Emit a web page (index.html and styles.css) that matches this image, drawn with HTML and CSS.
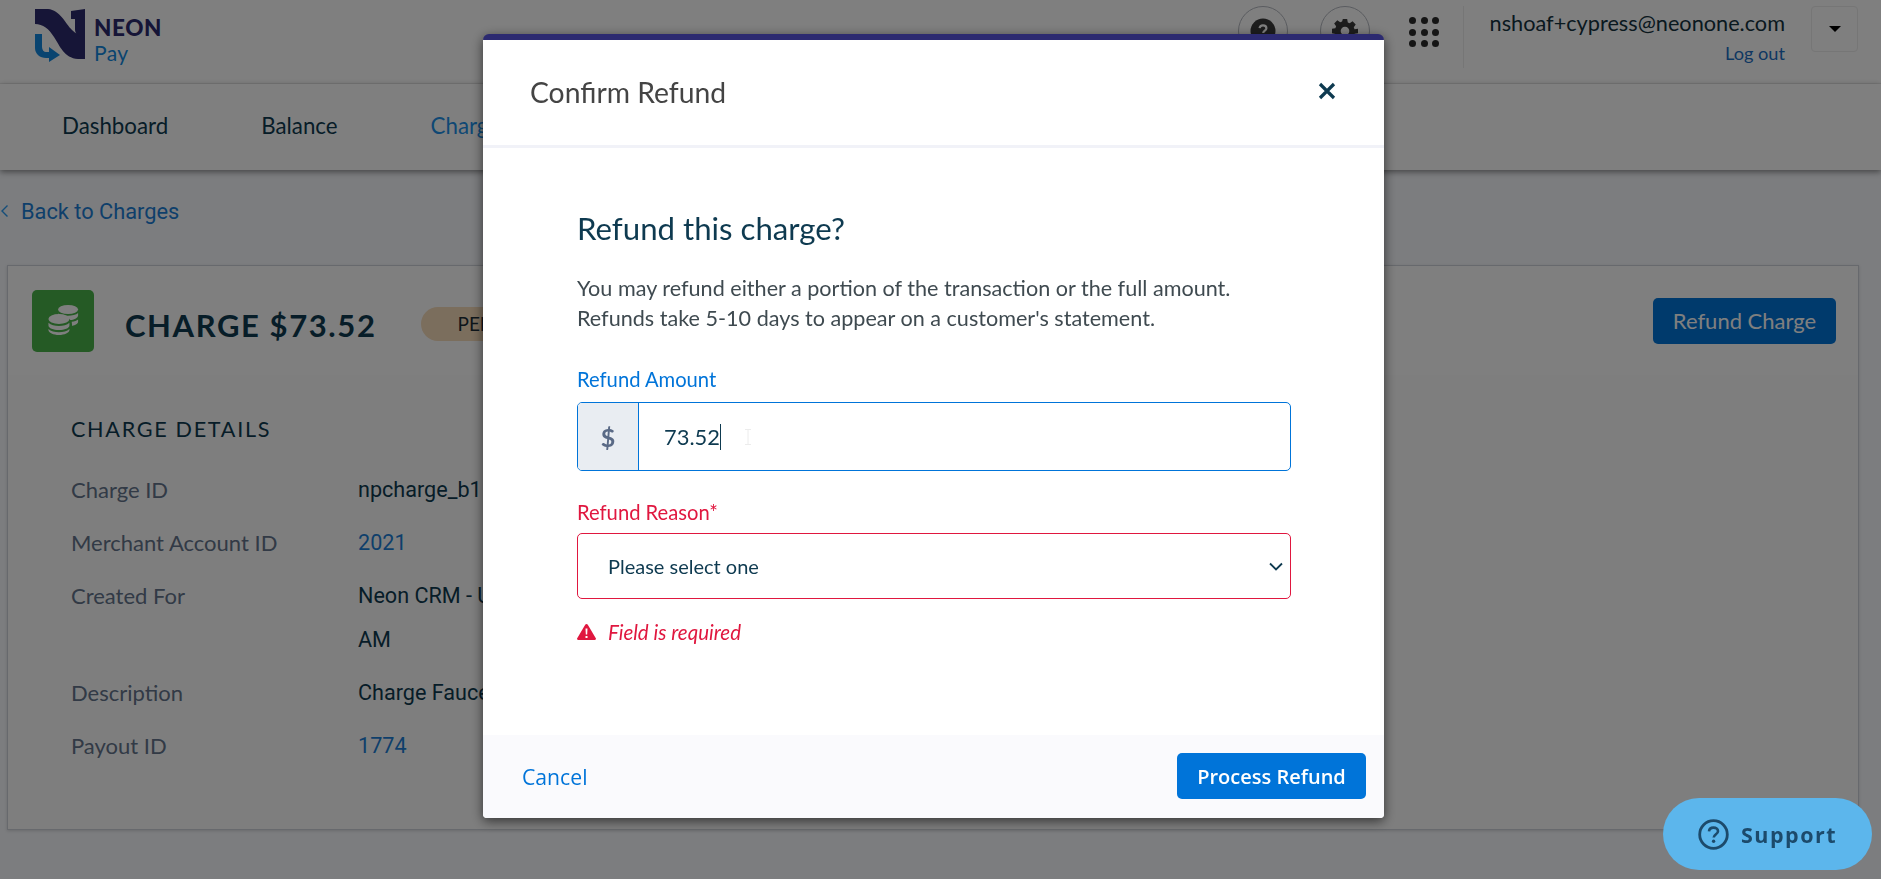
FILE: index.html
```html
<!DOCTYPE html>
<html lang="en">
<head>
<meta charset="utf-8">
<title>Confirm Refund - Neon Pay</title>
<link rel="stylesheet" href="styles.css">
</head>
<body>
<header class="topbar">
  <a class="logo" href="#">
    <svg class="logo-mark" width="60" height="56" viewBox="35 8 60 56" aria-hidden="true">
      <path class="logo-dark" d="M35 9H48C60 10 65 23 72 30C76 34 81 36 85 36V59H78C64 58 60 46 54 37C49 29 43 24 35 24Z"/>
      <path class="logo-dark" d="M71 11L85 9V37H81C77 36 75 33 75 29V19H71Z"/>
      <path class="logo-blue" d="M35 34H42V47C42 50 44 52 46 52H49V47L60 55L49 62V58H46C40 58 35 54 35 48Z"/>
    </svg>
    <span class="logo-text"><span class="logo-neon">NEON</span><span class="logo-pay">Pay</span></span>
  </a>
  <div class="top-actions">
    <span class="circle-btn">
      <svg width="26" height="26" viewBox="0 0 26 26" aria-hidden="true"><circle cx="13" cy="13" r="12.5" fill="#3a3a3a"/><path d="M9.6 10.2C9.8 8.4 11.2 7.4 13 7.4C15 7.4 16.4 8.6 16.4 10.3C16.4 12.6 13.4 12.7 13.2 15" fill="none" stroke="#fff" stroke-width="2.2"/><circle cx="13.2" cy="18" r="1.5" fill="#fff"/></svg>
    </span>
    <span class="circle-btn">
      <svg width="26" height="26" viewBox="0 0 24 24" aria-hidden="true"><path fill="#3a3a3a" d="M10 1h4l.6 3.1 1.7.7 2.7-1.8 2.9 2.9-1.8 2.7.7 1.7L24 10v4l-3.1.6-.7 1.7 1.8 2.7-2.9 2.9-2.7-1.8-1.7.7L14 24h-4l-.6-3.1-1.7-.7L5 22l-2.9-2.9 1.8-2.7-.7-1.7L0 14v-4l3.1-.6.7-1.7L2 5l2.9-2.9 2.7 1.8 1.7-.7z"/><circle cx="12" cy="12" r="4" fill="#fff"/></svg>
    </span>
    <span class="apps">
      <i></i><i></i><i></i><i></i><i></i><i></i><i></i><i></i><i></i>
    </span>
    <div class="user">
      <span class="user-email">nshoaf+cypress@neonone.com</span>
      <a class="user-logout" href="#">Log out</a>
    </div>
    <span class="user-menu"><span class="caret-down"></span></span>
  </div>
</header>

<nav class="mainnav">
  <a href="#">Dashboard</a>
  <a href="#">Balance</a>
  <a class="active" href="#">Charges</a>
</nav>

<main class="page">
  <a class="back" href="#"><svg width="9" height="14" viewBox="0 0 9 14" aria-hidden="true"><path d="M7.5 1.5L2 7l5.5 5.5" fill="none" stroke="#2a9df4" stroke-width="1.4"/></svg><span>Back to Charges</span></a>

  <section class="card">
    <div class="card-head">
      <span class="charge-icon">
        <svg width="31" height="31" viewBox="0 0 34 34" aria-hidden="true">
          <g fill="#fff">
            <ellipse cx="22" cy="6" rx="11" ry="5"/>
            <path d="M11 10.4C14 12.5 19 13 22 13C26 13 31 12 33 10V12.500C33 15 28 17.500 24.500 17.500C23.500 15.800 20 14 16.500 13.500C14.500 13.300 12 13 11 12.500Z"/>
            <path d="M26 19.500C29 19.500 31.500 18 33 17V19.500C33 21.500 30 23.500 26.500 24Z"/>
            <ellipse cx="12" cy="16.500" rx="11.500" ry="5.500"/>
            <path d="M.5 20.500C3 23 7.500 24 12 24C16.500 24 21 23 23.500 20.500V23.500C23.500 26.500 18 28.500 12 28.500C6 28.500 .5 26.500 .5 23.500Z"/>
            <path d="M.5 27.500C3 30 7.500 31 12 31C16.500 31 21 30 23.500 27.500V28.500C23.500 31.500 18 34 12 34C6 34 .5 31.500 .5 28.500Z"/>
          </g>
        </svg>
      </span>
      <h1 class="charge-title">CHARGE $73.52</h1>
      <span class="badge">PENDING</span>
      <a class="btn-refund" href="#">Refund Charge</a>
    </div>
    <div class="card-body">
      <h2 class="section-title">CHARGE DETAILS</h2>
      <dl class="details">
        <dt>Charge ID</dt><dd>npcharge_b1</dd>
        <dt>Merchant Account ID</dt><dd><a href="#">2021</a></dd>
        <dt>Created For</dt><dd>Neon CRM - U<br>AM</dd>
        <dt>Description</dt><dd>Charge Faucet</dd>
        <dt>Payout ID</dt><dd><a href="#">1774</a></dd>
      </dl>
    </div>
  </section>
</main>

<div class="backdrop">
  <div class="modal" role="dialog" aria-modal="true">
    <div class="modal-head">
      <h3 class="modal-title">Confirm Refund</h3>
      <svg class="modal-close" width="18" height="18" viewBox="0 0 18 18" aria-label="Close"><path d="M2 2l14 14M16 2L2 16" stroke="#0e3a50" stroke-width="3.2" fill="none"/></svg>
    </div>
    <div class="modal-body">
      <h4 class="question">Refund this charge?</h4>
      <p class="intro">You may refund either a portion of the transaction or the full amount.<br>Refunds take 5-10 days to appear on a customer's statement.</p>
      <label class="field-label focus">Refund Amount</label>
      <div class="amount">
        <span class="amount-addon">$</span>
        <span class="amount-value">73.52<span class="text-caret"></span></span>
        <svg class="ibeam" width="6" height="16" viewBox="0 0 6 16" aria-hidden="true"><path d="M0 .5h6M0 15.500h6M3 .5v15" stroke="#ececec" fill="none"/></svg>
      </div>
      <label class="field-label error">Refund Reason*</label>
      <div class="select">
        <span>Please select one</span>
        <svg width="14" height="9" viewBox="0 0 14 9" aria-hidden="true"><path d="M1 1.500l6 6 6-6" fill="none" stroke="#0e3a50" stroke-width="1.800"/></svg>
      </div>
      <div class="error-msg">
        <svg width="19" height="16" viewBox="0 0 19 16" aria-hidden="true"><path d="M9.500 0c.6 0 1 .3 1.300.8l8 13.400c.5.8 0 1.800-1 1.800H1.200c-1 0-1.500-1-1-1.800l8-13.400C8.500.3 8.900 0 9.500 0z" fill="#e0173f"/><path d="M8.500 4.500h2l-.3 6h-1.400zM8.500 12h2v2h-2z" fill="#fff"/></svg>
        <em>Field is required</em>
      </div>
    </div>
    <div class="modal-foot">
      <a class="cancel" href="#">Cancel</a>
      <a class="btn-process" href="#">Process Refund</a>
    </div>
  </div>
</div>

<a class="support" href="#">
  <svg width="31" height="31" viewBox="0 0 31 31" aria-hidden="true"><circle cx="15.500" cy="15.500" r="13.800" fill="none" stroke="#1c4a6b" stroke-width="2.800"/><path d="M11 12.300C11.200 9.800 13 8.600 15.500 8.600C18 8.600 20 10 20 12.200C20 15.200 16 15.200 15.700 18.500" fill="none" stroke="#1c4a6b" stroke-width="2.600"/><circle cx="15.600" cy="22.300" r="1.700" fill="#1c4a6b"/></svg>
  <span>Support</span>
</a>
</body>
</html>
```

FILE: styles.css
```css
* { box-sizing: border-box; }
html, body { height: 100%; }
body {
  margin: 0;
  height: 879px;
  overflow: hidden;
  background: #f8fafe;
  font-family: "Lato", sans-serif;
  font-size: 20px;
  color: #0e3a50;
}
a { text-decoration: none; color: inherit; }
h1, h2, h3, h4, p, dl, dd { margin: 0; font-weight: 400; }

/* top bar */
.topbar {
  height: 84px;
  background: #fff;
  border-bottom: 1px solid #f0f0f0;
  display: flex;
  align-items: flex-start;
  justify-content: space-between;
  padding: 0 23px 0 35px;
}
.logo { display: flex; align-items: flex-start; padding-top: 8px; }
.logo-mark { display: block; }
.logo-dark { fill: #2d2a6e; }
.logo-blue { fill: #1289e0; }
.logo-text { display: flex; flex-direction: column; padding-top: 7px; margin-left: -1px; }
.logo-neon { font-weight: 900; font-size: 22.500px; line-height: 26px; color: #2d2a6e; letter-spacing: .6px; }
.logo-pay { font-size: 21px; line-height: 23px; color: #1289e0; letter-spacing: .4px; }

.top-actions { display: flex; align-items: flex-start; padding-top: 6px; }
.circle-btn {
  width: 50px; height: 50px;
  border: 1px solid #b4b8c0;
  border-radius: 50%;
  display: flex; align-items: center; justify-content: center;
  margin-right: 32px;
}
.apps {
  display: grid;
  grid-template-columns: repeat(3, 7px);
  grid-auto-rows: 7px;
  gap: 4.500px;
  margin: 11px 24px 0 7px;
}
.apps i { background: #2b2b2b; border-radius: 50%; }
.user {
  width: 322px;
  height: 62px;
  border-left: 1px solid #ededed;
  display: flex; flex-direction: column; align-items: flex-end;
  padding-top: 2px;
}
.user-email { font-size: 21.700px; line-height: 30px; color: #14323f; white-space: nowrap; }
.user-logout { font-size: 18.200px; line-height: 30px; color: #1d6fc4; }
.user-menu {
  width: 47px; height: 46px;
  margin-left: 26px;
  border: 1px solid #ececec;
  border-radius: 4px;
  display: flex; align-items: center; justify-content: center;
}
.caret-down { width: 0; height: 0; border: 6px solid transparent; border-top-color: #000; border-bottom: 0; }

/* main nav */
.mainnav {
  height: 86px;
  background: #fff;
  box-shadow: 0 2px 6px rgba(0, 0, 0, .45);
  display: flex;
  align-items: center;
  padding: 0 0 4px 62px;
  gap: 93px;
  font-size: 22.300px;
  color: #0e3a50;
  position: relative;
}
.mainnav .active { color: #1e90e8; }

/* page */
.page { padding: 0 22px 0 0; }
.back {
  height: 24px;
  margin-top: 29px;
  display: flex; align-items: center;
  font-family: "Roboto", sans-serif;
  font-size: 21.800px;
  color: #1d7fd6;
}
.back svg { margin-right: 12px; }

.card {
  margin: 42px 0 0 7px;
  height: 565px;
  background: #fff;
  border: 1px solid #cfd3da;
  box-shadow: 0 1px 3px rgba(0, 0, 0, .15);
}
.card-head {
  height: 109px;
  display: flex;
  align-items: flex-start;
  padding: 24px 22px 0 24px;
}
.charge-icon {
  width: 62px; height: 62px;
  background: #4ab44a;
  border-radius: 5px;
  display: flex; align-items: center; justify-content: center;
  margin-right: 30px;
  padding: 0 0 3px 0;
}
.charge-title {
  font-size: 31px;
  line-height: 34px;
  font-weight: 700;
  letter-spacing: 1.600px;
  color: #0e3a50;
  margin-top: 18px;
  margin-right: 45px;
  margin-left: 1px;
  white-space: nowrap;
}
.badge {
  width: 150px; height: 34px;
  margin-top: 17px;
  border-radius: 17px;
  background: #f6dcbb;
  color: #1c2c36;
  font-size: 19px;
  line-height: 34px;
  padding-left: 36px;
}
.btn-refund {
  margin-left: auto;
  margin-top: 8px;
  width: 183px; height: 46px;
  background: #0074d9;
  border-radius: 5px;
  color: #fff;
  font-size: 22px;
  line-height: 45px;
  text-align: center;
}
.card-body { background: #fdfdfd; height: 454px; padding: 37px 63px 0; }
.section-title { font-size: 21.600px; line-height: 34px; letter-spacing: 1.700px; color: #0e3a50; margin-bottom: 22px; }
.details {
  display: grid;
  grid-template-columns: 287px 1fr;
  row-gap: 9px;
  line-height: 44px;
}
.details dt { color: #64748c; font-size: 22px; }
.details dd { font-family: "Roboto", sans-serif; font-size: 21.600px; color: #0e3a50; }
.details dd a { color: #1d7fd6; }

/* modal */
.backdrop {
  position: fixed;
  inset: 0;
  background: rgba(0, 0, 0, .5);
  padding: 34px 0 0 483px;
}
.modal {
  width: 901px;
  height: 784px;
  background: #fff;
  border-top: 6px solid #2c2a70;
  border-radius: 6px 6px 4px 4px;
  box-shadow: 0 3px 12px rgba(0, 0, 0, .6);
  display: flex;
  flex-direction: column;
}
.modal-head {
  height: 108px;
  flex: none;
  border-bottom: 3px solid #f1f2f8;
  display: flex;
  align-items: center;
  justify-content: space-between;
  padding: 0 48px 0 47px;
}
.modal-title { font-size: 28.300px; color: #444; margin-top: -2px; }
.modal-close { margin-top: -4px; }
.modal-body { flex: 1; padding: 63px 93px 0 94px; }
.question { font-size: 31.200px; line-height: 34px; color: #0e3a50; margin-bottom: 28px; }
.intro { font-size: 21.600px; line-height: 30px; color: #3f4a50; margin-bottom: 35px; }
.field-label { display: block; font-size: 20.200px; line-height: 22px; }
.field-label.focus { color: #0074d9; margin-bottom: 12px; }
.field-label.error { color: #e0173f; margin-top: 30px; margin-bottom: 10px; }
.amount {
  height: 69px;
  border: 1px solid #0074d9;
  border-radius: 5px;
  display: flex;
  align-items: center;
  overflow: hidden;
}
.amount-addon {
  width: 61px; height: 100%;
  background: #e9edf2;
  border-right: 1px solid #0074d9;
  color: #5a6a86;
  font-size: 25px;
  font-weight: 700;
  display: flex; align-items: center; justify-content: center;
}
.amount-value { margin-left: 25px; font-size: 21.900px; color: #0e3a50; display: flex; align-items: center; height: 26px; }
.text-caret { width: 1px; height: 26px; background: #0e3a50; }
.ibeam { margin-left: 24px; }
.select {
  height: 66px;
  border: 1px solid #e0173f;
  border-radius: 5px;
  display: flex;
  align-items: center;
  justify-content: space-between;
  padding: 0 7px 0 30px;
  font-size: 20px;
  color: #0e3a50;
}
.error-msg {
  display: flex;
  align-items: center;
  gap: 12px;
  margin-top: 21px;
  color: #e0173f;
  font-size: 20.500px;
  line-height: 24px;
}
.error-msg em { font-style: italic; }
.modal-foot {
  height: 83px;
  flex: none;
  background: #fafafd;
  border-radius: 0 0 4px 4px;
  display: flex;
  align-items: flex-start;
  justify-content: space-between;
  padding: 18px 18px 0 39px;
  font-family: "Open Sans", sans-serif;
  font-size: 20px;
}
.cancel { color: #0074d9; line-height: 47px; font-size: 21.200px; }
.btn-process {
  width: 189px; height: 46px;
  background: #0074d9;
  border-radius: 5px;
  color: #fff;
  font-weight: 600;
  line-height: 47px;
  text-align: center;
}

/* support */
.support {
  position: fixed;
  left: 1663px;
  top: 798px;
  width: 209px;
  height: 72px;
  border-radius: 36px;
  background: #5cb6ec;
  color: #1c4a6b;
  display: flex;
  align-items: center;
  padding-left: 35px;
  gap: 12px;
  font-family: "Open Sans", sans-serif;
  font-weight: 700;
  font-size: 21.500px;
  letter-spacing: 1.500px;
}
```
